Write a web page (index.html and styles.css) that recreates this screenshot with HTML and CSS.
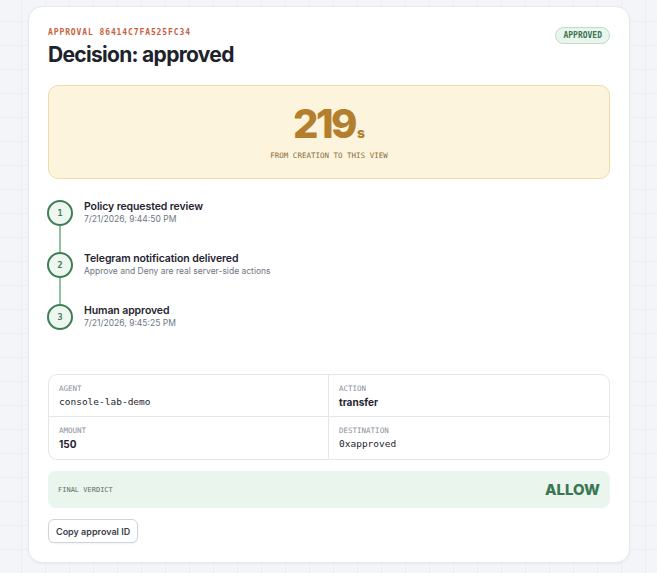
FILE: index.html
```html
<!DOCTYPE html>
<html lang="en">
<head>
  <meta charset="UTF-8">
  <title>Approval 86414C7FA525FC34</title>
  <link rel="stylesheet" href="styles.css">
</head>
<body>
  <div class="page">
    <div class="card">
      <div class="card-head">
        <div>
          <div class="eyebrow">APPROVAL 86414C7FA525FC34</div>
          <h1>Decision: approved</h1>
        </div>
        <span class="badge">APPROVED</span>
      </div>

      <div class="elapsed">
        <div class="elapsed-num">219<span class="unit">s</span></div>
        <div class="elapsed-label">FROM CREATION TO THIS VIEW</div>
      </div>

      <ol class="steps">
        <li class="step">
          <span class="dot">1</span>
          <div>
            <div class="step-title">Policy requested review</div>
            <div class="step-sub">7/21/2026, 9:44:50 PM</div>
          </div>
        </li>
        <li class="step">
          <span class="dot">2</span>
          <div>
            <div class="step-title">Telegram notification delivered</div>
            <div class="step-sub">Approve and Deny are real server-side actions</div>
          </div>
        </li>
        <li class="step">
          <span class="dot">3</span>
          <div>
            <div class="step-title">Human approved</div>
            <div class="step-sub">7/21/2026, 9:45:25 PM</div>
          </div>
        </li>
      </ol>

      <div class="details">
        <div class="field">
          <div class="field-label">AGENT</div>
          <div class="field-value mono">console-lab-demo</div>
        </div>
        <div class="field">
          <div class="field-label">ACTION</div>
          <div class="field-value">transfer</div>
        </div>
        <div class="field">
          <div class="field-label">AMOUNT</div>
          <div class="field-value">150</div>
        </div>
        <div class="field">
          <div class="field-label">DESTINATION</div>
          <div class="field-value mono">0xapproved</div>
        </div>
      </div>

      <div class="verdict">
        <span class="verdict-label">FINAL VERDICT</span>
        <span class="verdict-value">ALLOW</span>
      </div>

      <button class="copy-btn">Copy approval ID</button>
    </div>
  </div>
</body>
</html>
```

FILE: styles.css
```css
body {
  margin: 0;
  font-family: Inter, 'Noto Sans', sans-serif;
  color: #1f2430;
  background-color: #f4f5f8;
  background-image:
    linear-gradient(#eceef2 1px, transparent 1px),
    linear-gradient(90deg, #eceef2 1px, transparent 1px);
  background-size: 24px 24px;
  background-position: -3px -3px;
}

.page {
  padding: 6px 27px 10px 28px;
}

.card {
  background: #fff;
  border: 1px solid #e6e8ec;
  border-radius: 14px;
  box-shadow: 0 1px 3px rgba(20, 30, 50, 0.05);
  padding: 20px 19px 19px;
}

.card-head {
  display: flex;
  justify-content: space-between;
  align-items: flex-start;
}

.eyebrow {
  font-family: 'DejaVu Sans Mono', monospace;
  font-size: 8px;
  font-weight: 700;
  letter-spacing: 0.9px;
  color: #c8603f;
  line-height: 12px;
}

h1 {
  margin: 3px 0 0;
  font-size: 21px;
  font-weight: 700;
  letter-spacing: -0.7px;
  line-height: 26px;
  color: #1d222c;
}

.badge {
  padding: 0 7px;
  height: 15px;
  line-height: 15px;
  border: 1px solid #bcdcc6;
  border-radius: 10px;
  background: #e9f5ed;
  color: #3b7650;
  font-family: 'DejaVu Sans Mono', monospace;
  font-size: 8px;
  font-weight: 700;
}

.elapsed {
  margin-top: 17px;
  height: 94px;
  box-sizing: border-box;
  border: 1px solid #f0dca8;
  border-radius: 10px;
  background: #fdf4de;
  text-align: center;
  padding-top: 21px;
}

.elapsed-num {
  font-size: 40px;
  font-weight: 800;
  letter-spacing: -2.5px;
  line-height: 34px;
  color: #b37f2e;
}

.unit {
  font-size: 14px;
  letter-spacing: 0;
  margin-left: 2px;
}

.elapsed-label {
  margin-top: 1px;
  font-family: 'DejaVu Sans Mono', monospace;
  font-size: 7.5px;
  color: #8b6c3c;
}

.steps {
  list-style: none;
  margin: 21px 0 0;
  padding: 0;
}

.step {
  position: relative;
  display: flex;
  gap: 11px;
  height: 52px;
}

/* connector between the dots */
.step::before {
  content: '';
  position: absolute;
  left: 11px;
  top: 26px;
  width: 2px;
  height: 26px;
  background: #8cc29d;
}

.step:last-child::before {
  display: none;
}

.dot {
  flex: none;
  width: 22px;
  height: 22px;
  border: 2px solid #3f7d57;
  border-radius: 50%;
  background: #edf7f0;
  color: #3f7d57;
  font-family: 'DejaVu Sans Mono', monospace;
  font-size: 8.5px;
  font-weight: 700;
  display: flex;
  align-items: center;
  justify-content: center;
  margin-left: -1px;
}

.step-title {
  font-size: 10.5px;
  font-weight: 600;
  letter-spacing: -0.1px;
  line-height: 13px;
  color: #1f2430;
}

.step-sub {
  margin-top: 1px;
  font-size: 8.5px;
  line-height: 11px;
  color: #6e7582;
}

.details {
  margin-top: 18px;
  display: grid;
  grid-template-columns: 1fr 1fr;
  border: 1px solid #e3e6ea;
  border-radius: 9px;
}

.field {
  padding: 9px 10px 0;
  height: 42px;
  box-sizing: border-box;
}

.field:nth-child(odd) {
  border-right: 1px solid #e3e6ea;
}

.field:nth-child(-n+2) {
  border-bottom: 1px solid #e3e6ea;
}

.field-label {
  font-family: 'DejaVu Sans Mono', monospace;
  font-size: 7.5px;
  line-height: 10px;
  color: #8a909a;
}

.field-value {
  margin-top: 1px;
  font-size: 10px;
  font-weight: 700;
  line-height: 14px;
  color: #1f2430;
}

.field-value.mono {
  font-family: 'DejaVu Sans Mono', monospace;
  font-size: 9.5px;
  font-weight: 400;
}

.verdict {
  margin-top: 11px;
  height: 37px;
  padding: 0 10px;
  border-radius: 8px;
  background: #e9f5ed;
  display: flex;
  align-items: center;
  justify-content: space-between;
}

.verdict-label {
  font-family: 'DejaVu Sans Mono', monospace;
  font-size: 7px;
  color: #5d6f64;
}

.verdict-value {
  font-size: 15px;
  font-weight: 800;
  color: #3b7650;
}

.copy-btn {
  margin-top: 11px;
  height: 24px;
  padding: 0 7px;
  border: 1px solid #cfd3da;
  border-radius: 6px;
  background: #fff;
  box-shadow: 0 1px 2px rgba(20, 30, 50, 0.06);
  font-family: Inter, sans-serif;
  font-size: 9px;
  font-weight: 600;
  color: #3a3f4a;
  cursor: pointer;
}
```
